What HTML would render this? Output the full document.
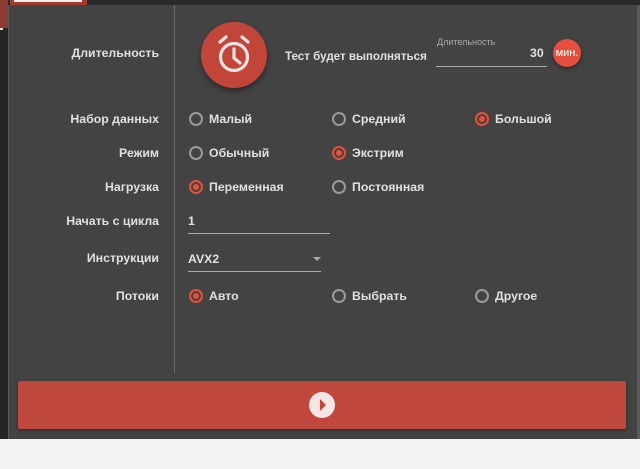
<!DOCTYPE html><html><head><meta charset="utf-8"><style>
body{margin:0;width:640px;height:469px;background:#f3f3f3;position:relative;overflow:hidden;font-family:"Liberation Sans","DejaVu Sans",sans-serif;font-size:12.3px;font-weight:bold;color:#e0e0e0}
.a{position:absolute}
.lab{position:absolute;right:481px;text-align:right;white-space:nowrap}
.r{position:absolute;width:10px;height:10px;border:2px solid #9a9a9a;border-radius:50%}
.r.on{border-color:#e8503a}
.r.on:after{content:"";position:absolute;left:2px;top:2px;width:6px;height:6px;border-radius:50%;background:#e8503a}
.t{position:absolute;white-space:nowrap;line-height:16px}
</style></head><body>
<div class="a" style="left:0;top:0;width:640px;height:439px;background:#434343"></div>
<div class="a" style="left:0;top:0;width:640px;height:5px;background:#2a2a2a"></div>
<div class="a" style="left:10px;top:0;width:77px;height:5px;background:#a33a30"></div>
<div class="a" style="left:14px;top:0;width:68px;height:2px;background:#eee"></div>
<div class="a" style="left:0;top:0;width:8px;height:439px;background:#252525"></div>
<div class="a" style="left:0;top:0;width:8px;height:28px;background:#8c3a33"></div>
<div class="a" style="left:0;top:28px;width:3px;height:2px;background:#ddd"></div>
<div class="a" style="left:8px;top:5px;width:1px;height:434px;background:#5a5a5a"></div>
<div class="a" style="left:637px;top:5px;width:3px;height:434px;background:#5a5a5a"></div>
<div class="a" style="left:174px;top:5px;width:1px;height:368px;background:#6a6a6a"></div>

<div class="lab" style="top:46px">Длительность</div>
<div class="lab" style="top:112px">Набор данных</div>
<div class="lab" style="top:146px">Режим</div>
<div class="lab" style="top:180px">Нагрузка</div>
<div class="lab" style="top:214px">Начать с цикла</div>
<div class="lab" style="top:251px">Инструкции</div>
<div class="lab" style="top:289px">Потоки</div>

<div class="a" style="left:201px;top:22px;width:66px;height:66px;border-radius:50%;background:#c2453a;box-shadow:0 3px 6px rgba(0,0,0,.4)"></div>
<svg class="a" style="left:211px;top:31px" width="46" height="48" viewBox="0 0 46 48"><g fill="none" stroke="#f3e3e0" stroke-width="3.2" stroke-linecap="round"><circle cx="23" cy="26" r="13.5"/><path d="M23 18v9l6 5M9 11l6-5M37 11l-6-5"/></g></svg>
<div class="t" style="left:285px;top:49px;font-size:11.6px">Тест будет выполняться</div>
<div class="t" style="left:437px;top:34px;font-size:9px;font-weight:normal;color:#aaa">Длительность</div>
<div class="t" style="left:530px;top:45px">30</div>
<div class="a" style="left:436px;top:66px;width:111px;height:1px;background:#aaa"></div>
<div class="a" style="left:553px;top:39px;width:28px;height:28px;border-radius:50%;background:#e4503d;box-shadow:0 2px 4px rgba(0,0,0,.4)"></div>
<div class="t" style="left:552px;top:45px;width:30px;text-align:center;font-size:11px;font-weight:normal;color:#fff">мин.</div>

<div class="r" style="left:189px;top:112px"></div><div class="t" style="left:209px;top:111px">Малый</div>
<div class="r" style="left:332px;top:112px"></div><div class="t" style="left:352px;top:111px">Средний</div>
<div class="r on" style="left:475px;top:112px"></div><div class="t" style="left:495px;top:111px">Большой</div>
<div class="r" style="left:189px;top:146px"></div><div class="t" style="left:209px;top:145px">Обычный</div>
<div class="r on" style="left:332px;top:146px"></div><div class="t" style="left:352px;top:145px">Экстрим</div>
<div class="r on" style="left:189px;top:180px"></div><div class="t" style="left:209px;top:179px">Переменная</div>
<div class="r" style="left:332px;top:180px"></div><div class="t" style="left:352px;top:179px">Постоянная</div>
<div class="t" style="left:188px;top:213px">1</div>
<div class="a" style="left:188px;top:233px;width:142px;height:1px;background:#aaa"></div>
<div class="t" style="left:188px;top:251px">AVX2</div>
<div class="a" style="left:313px;top:257px;width:0;height:0;border-left:4px solid transparent;border-right:4px solid transparent;border-top:4px solid #aaa"></div>
<div class="a" style="left:188px;top:271px;width:133px;height:1px;background:#aaa"></div>
<div class="r on" style="left:189px;top:289px"></div><div class="t" style="left:209px;top:288px">Авто</div>
<div class="r" style="left:332px;top:289px"></div><div class="t" style="left:352px;top:288px">Выбрать</div>
<div class="r" style="left:475px;top:289px"></div><div class="t" style="left:495px;top:288px">Другое</div>

<div class="a" style="left:18px;top:381px;width:608px;height:48px;background:#c0473b;border-radius:2px;box-shadow:0 1px 3px rgba(0,0,0,.4)"></div>
<div class="a" style="left:309px;top:392px;width:26px;height:26px;border-radius:50%;background:#f5e6e4"></div>
<div class="a" style="left:320px;top:399px;width:0;height:0;border-top:6px solid transparent;border-bottom:6px solid transparent;border-left:6px solid #c0473b"></div>
</body></html>
